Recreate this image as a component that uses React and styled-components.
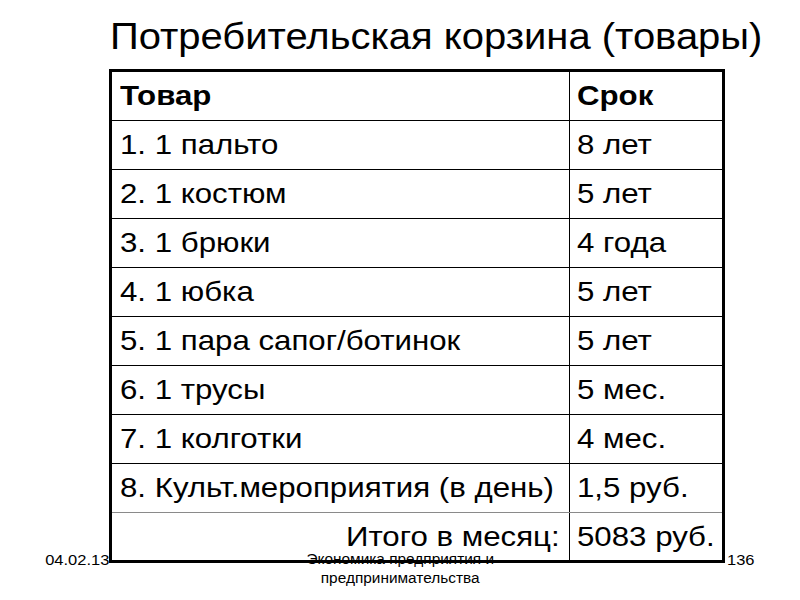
import React from "react";
import styled, { createGlobalStyle } from "styled-components";

const Global = createGlobalStyle`
  html, body { margin: 0; padding: 0; background: #fff; }
  body { font-family: "Liberation Sans", Arial, sans-serif; color: #000; }
`;

const Slide = styled.div`
  position: relative;
  width: 800px;
  height: 600px;
  overflow: hidden;
  background: #fff;
`;

const Title = styled.h1`
  margin: 0;
  padding: 16px 0 0 110px;
  height: 55px;
  box-sizing: border-box;
  font-weight: normal;
  font-size: 36px;
  line-height: 42px;
  white-space: nowrap;
`;

/* the slide's text is drawn slightly widened, as in the reference */
const Wide = styled.span`
  display: inline-block;
  transform: scaleX(${(p) => p.$k || 1.115});
  transform-origin: ${(p) => p.$origin || "left"} center;
  white-space: nowrap;
`;

const Table = styled.div`
  margin: 14px 0 0 109px;
  width: 616px;
  border: 3px solid #000;
  box-sizing: border-box;
`;

const Row = styled.div`
  display: grid;
  grid-template-columns: 457px 1fr;
  height: ${(p) => (p.$last ? 47 : 49)}px;
  box-sizing: border-box;
  border-bottom: ${(p) => (p.$last ? "none" : `1px solid ${p.$soft ? "#8a8a8a" : "#000"}`)};
`;

const Cell = styled.div`
  display: flex;
  align-items: center;
  justify-content: ${(p) => (p.$right ? "flex-end" : "flex-start")};
  padding: 0 ${(p) => (p.$right ? 9 : 8)}px 0 ${(p) => (p.$second ? 7 : 8)}px;
  border-left: ${(p) => (p.$second ? "1px solid #000" : "none")};
  font-size: 28px;
  font-weight: ${(p) => (p.$bold ? "bold" : "normal")};
  white-space: nowrap;
`;

const Footer = styled.div`
  position: absolute;
  left: 0;
  right: 0;
  top: 550px;
  display: grid;
  grid-template-columns: 110px 1fr 75px;
  font-size: 14px;
  line-height: 19px;
  pointer-events: none;
`;

const FDate = styled.div`
  text-align: right;
  padding-right: 1px;
  font-size: 15px;
`;

const FCenter = styled.div`
  text-align: center;
  padding-right: 34px;
`;

const FNum = styled.div`
  padding-left: 2px;
  font-size: 15px;
`;

const rows = [
  ["1. 1 пальто", "8 лет"],
  ["2. 1 костюм", "5 лет"],
  ["3. 1 брюки", "4 года"],
  ["4. 1 юбка", "5 лет"],
  ["5. 1 пара сапог/ботинок", "5 лет"],
  ["6. 1 трусы", "5 мес."],
  ["7. 1 колготки", "4 мес."],
  ["8. Культ.мероприятия (в день)", "1,5 руб."],
];

export default function App() {
  return (
    <Slide>
      <Global />
      <Title>
        <Wide $k={1.11}>Потребительская корзина (товары)</Wide>
      </Title>
      <Table>
        <Row>
          <Cell $bold><Wide>Товар</Wide></Cell>
          <Cell $second $bold><Wide>Срок</Wide></Cell>
        </Row>
        {rows.map(([a, b], i) => (
          <Row key={i} $soft={i === rows.length - 1}>
            <Cell><Wide>{a}</Wide></Cell>
            <Cell $second><Wide>{b}</Wide></Cell>
          </Row>
        ))}
        <Row $last>
          <Cell $right><Wide $origin="right">Итого в месяц:</Wide></Cell>
          <Cell $second><Wide>5083 руб.</Wide></Cell>
        </Row>
      </Table>
      <Footer>
        <FDate><Wide $origin="right" $k={1.1}>04.02.13</Wide></FDate>
        <FCenter>
          <Wide $origin="center" $k={1.1}>Экономика предприятия и</Wide>
          <br />
          <Wide $origin="center" $k={1.1}>предпринимательства</Wide>
        </FCenter>
        <FNum><Wide $k={1.1}>136</Wide></FNum>
      </Footer>
    </Slide>
  );
}
